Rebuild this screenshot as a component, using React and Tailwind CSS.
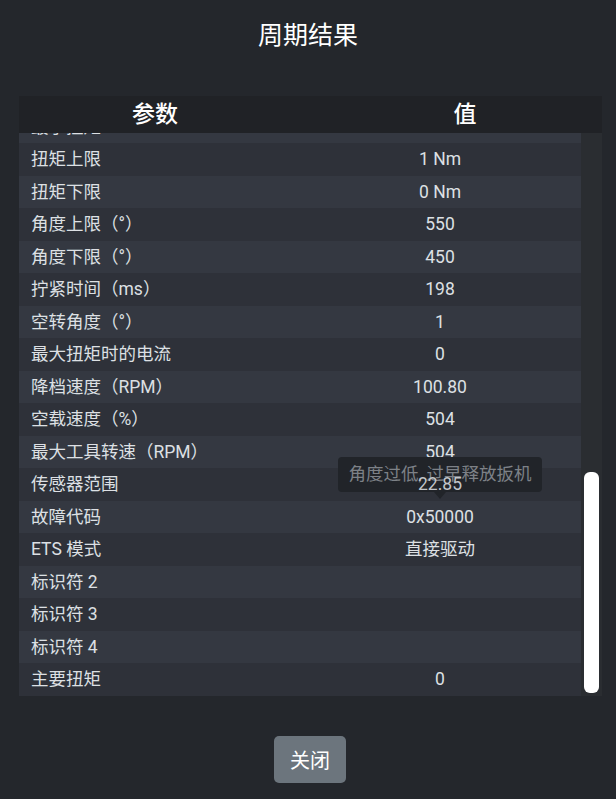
import React from "react";

const rows = [
  ["最小扭矩", ""],
  ["扭矩上限", "1 Nm"],
  ["扭矩下限", "0 Nm"],
  ["角度上限（°）", "550"],
  ["角度下限（°）", "450"],
  ["拧紧时间（ms）", "198"],
  ["空转角度（°）", "1"],
  ["最大扭矩时的电流", "0"],
  ["降档速度（RPM）", "100.80"],
  ["空载速度（%）", "504"],
  ["最大工具转速（RPM）", "504"],
  ["传感器范围", "22.85", true],
  ["故障代码", "0x50000"],
  ["ETS 模式", "直接驱动"],
  ["标识符 2", ""],
  ["标识符 3", ""],
  ["标识符 4", ""],
  ["主要扭矩", "0"],
];

export default function App() {
  return (
    <div className="min-h-[799px] w-full bg-[#24272c] flex flex-col font-['Roboto','Noto_Sans_CJK_SC',sans-serif] text-[#dde0e4]">
      <div className="h-[68px] flex items-center justify-center text-white text-[25px] font-['Noto_Sans_CJK_SC',sans-serif]">
        周期结果
      </div>
      <div className="mt-[28px] mx-[19px] w-[583px] flex flex-col">
        <div className="h-[37px] pb-[5px] bg-[#202226] flex items-center text-white text-[23px] font-medium font-['Noto_Sans_CJK_SC',sans-serif]">
          <div className="w-[272px] text-center">参数</div>
          <div className="flex-1 pl-[37px] text-center">值</div>
        </div>
        <div className="h-[563px] flex">
          <div className="w-[562px] overflow-hidden">
            <div className="-mt-[22.5px] flex flex-col">
              {rows.map(([k, v, tip], i) => (
                <div
                  key={i}
                  className={
                    "h-[32.5px] flex items-center text-[17.5px] " +
                    (i % 2 === 0 ? "bg-[#343841]" : "bg-[#2e3139]")
                  }
                >
                  <div className="w-[280px] pl-3 whitespace-nowrap">{k}</div>
                  <div className="flex-1 h-full flex items-center justify-center relative">
                    {tip && (
                      <div className="absolute left-1/2 -translate-x-1/2 -top-[11px] h-[35px] w-[204px] rounded bg-[#212429] flex items-center justify-center text-[#7d8187] text-[17.5px] whitespace-nowrap">
                        角度过低, 过早释放扳机
                        <div className="absolute left-1/2 -translate-x-1/2 top-full w-0 h-0 border-l-[6px] border-r-[6px] border-t-[7px] border-l-transparent border-r-transparent border-t-[#212429]" />
                      </div>
                    )}
                    <span className={tip ? "relative z-10 text-[#c3c6ca]" : ""}>{v}</span>
                  </div>
                </div>
              ))}
            </div>
          </div>
          <div className="w-[21px] bg-[#2a2d31] flex flex-col pl-[3px] pr-[3px] pt-[339px] pb-[3px]">
            <div className="flex-1 bg-white rounded-[6px]" />
          </div>
        </div>
      </div>
      <div className="mt-[40px] flex justify-center pl-[4px]">
        <button className="h-[47px] w-[72px] rounded-[5px] bg-[#6c757d] text-white text-[20px] font-['Noto_Sans_CJK_SC',sans-serif] flex items-center justify-center">
          关闭
        </button>
      </div>
    </div>
  );
}
